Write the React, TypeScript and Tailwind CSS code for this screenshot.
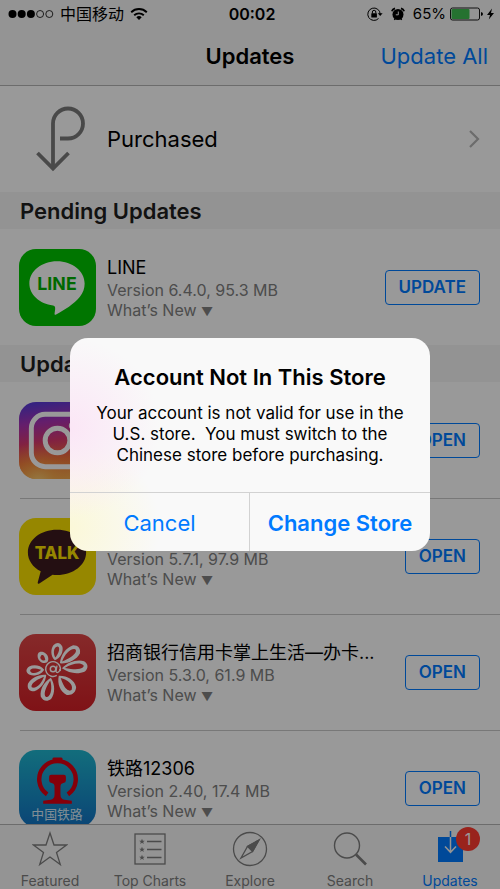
import React from 'react';

interface AppIconProps {
  className?: string;
}

interface StoreApp {
  name: string;
  details?: string;
  icon: React.FC<AppIconProps>;
}

interface TabItem {
  label: string;
  icon: React.ReactNode;
  badge?: number;
  active?: boolean;
}

const LineIcon: React.FC<AppIconProps> = ({ className }) => (
  <svg viewBox="0 0 78 78" className={className} aria-hidden="true">
    <rect width="78" height="78" fill="#00c300" />
    <path
      d="M38.500 12.500C23 12.500 10.500 22.500 10.500 35C10.500 46.500 21 55.500 34.500 57.300C36.500 57.800 36.800 59 36.600 61L36 65.500C36 66.500 36.500 67 37.600 66.400C46 61.800 56 55.500 61.500 48.600C65 44.500 66.500 40 66.500 35C66.500 22.500 54 12.500 38.500 12.500Z"
      fill="#fff"
    />
    <text x="38.500" y="42" textAnchor="middle" fontSize="18" fontWeight="700" fill="#00b000" fontFamily="Inter, sans-serif">
      LINE
    </text>
  </svg>
);

const InstagramIcon: React.FC<AppIconProps> = ({ className }) => (
  <svg viewBox="0 0 78 78" className={className} aria-hidden="true">
    <defs>
      <linearGradient id="ig-base" x1="0.350" y1="0" x2="0.500" y2="1">
        <stop offset="0" stopColor="#5b3ad6" />
        <stop offset="0.250" stopColor="#a832b4" />
        <stop offset="0.500" stopColor="#d8386e" />
        <stop offset="0.750" stopColor="#f07038" />
        <stop offset="1" stopColor="#f2b050" />
      </linearGradient>
      <radialGradient id="ig-glow" cx="0.250" cy="1.050" r="0.550">
        <stop offset="0" stopColor="#f8d078" />
        <stop offset="0.400" stopColor="#f8a84a" stopOpacity="0.600" />
        <stop offset="1" stopColor="#f77737" stopOpacity="0" />
      </radialGradient>
    </defs>
    <rect width="78" height="78" fill="url(#ig-base)" />
    <rect width="78" height="78" fill="url(#ig-glow)" />
    <rect x="12.500" y="12.500" width="53" height="53" rx="14" fill="none" stroke="#fff" strokeWidth="5" />
    <circle cx="39" cy="39" r="12.500" fill="none" stroke="#fff" strokeWidth="5" />
    <circle cx="54" cy="24" r="3.500" fill="#fff" />
  </svg>
);

const TalkIcon: React.FC<AppIconProps> = ({ className }) => (
  <svg viewBox="0 0 78 78" className={className} aria-hidden="true">
    <rect width="78" height="78" fill="#fae100" />
    <path
      d="M38.500 12C22 12 9 22 9 35C9 43 14 50 22 54L19 65C18.700 66.500 20 67 21 66.200L34 57.500C35.500 57.700 37 57.800 38.500 57.800C55 57.800 68 47.500 68 35C68 22 55 12 38.500 12Z"
      fill="#3c1a1e"
    />
    <text x="38.500" y="42" textAnchor="middle" fontSize="17" fontWeight="800" fill="#fae100" fontFamily="Inter, sans-serif">
      TALK
    </text>
  </svg>
);

// angle in degrees, length from the middle of the flower, half width
const PETALS = [
  [-5, 35, 5.2],
  [-40, 34, 5.4],
  [-78, 27, 4.6],
  [-131, 22, 4],
  [176, 27, 4.2],
  [140, 32, 5],
  [104, 33, 5.4],
  [50, 32, 6.2],
];

const FlowerIcon: React.FC<AppIconProps> = ({ className }) => (
  <svg viewBox="0 0 78 78" className={className} aria-hidden="true">
    <defs>
      <linearGradient id="cmb-red" x1="0" y1="0" x2="0" y2="1">
        <stop offset="0" stopColor="#df4646" />
        <stop offset="1" stopColor="#d41f26" />
      </linearGradient>
    </defs>
    <rect width="78" height="78" fill="url(#cmb-red)" />
    <g transform="translate(34.500 35.500)" fill="#fff" fillRule="evenodd">
      {PETALS.map(([angle, len, w]) => (
        <path
          key={angle}
          transform={`rotate(${angle})`}
          d={`M9 0C${len * 0.45} ${-w * 1.1} ${len * 0.7} ${-w * 1.5} ${len - 3} ${-w}C${len + 1} ${-w * 0.4} ${len + 1} ${w * 0.4} ${len - 3} ${w}C${len * 0.7} ${w * 1.5} ${len * 0.45} ${w * 1.1} 9 0Z
             M12 0C${len * 0.55} ${-w * 0.7} ${len * 0.8} ${-w * 0.9} ${len - 4} ${-w * 0.2}C${len - 3} ${w * 0.2} ${len * 0.8} ${w * 0.9} 12 0Z`}
        />
      ))}
      <circle r="7.500" fill="none" stroke="#fff" strokeWidth="1.500" strokeDasharray="41 6" transform="rotate(60)" />
      <circle r="2.800" fill="none" stroke="#fff" strokeWidth="1.500" />
      <path d="M4 -3.500L3 2C3 4.500 6.500 4 7 0" fill="none" stroke="#fff" strokeWidth="1.300" />
    </g>
  </svg>
);

const RailwayIcon: React.FC<AppIconProps> = ({ className }) => (
  <svg viewBox="0 0 78 78" className={className} aria-hidden="true">
    <defs>
      <linearGradient id="rail-blue" x1="0" y1="0" x2="0" y2="1">
        <stop offset="0" stopColor="#1fb6cf" />
        <stop offset="1" stopColor="#1273c4" />
      </linearGradient>
    </defs>
    <rect width="78" height="78" fill="url(#rail-blue)" />
    <path d="M28.500 45A18.500 18.500 0 1 1 49.500 45" fill="none" stroke="#dc0012" strokeWidth="4.500" />
    <path d="M34 12V8.500Q34 7.500 35.500 7.500H42.500Q44 7.500 44 8.500V12Z" fill="#dc0012" />
    <path
      d="M32.500 25H45.500Q47.500 25 47.500 27V31Q47.500 33.500 45 33.500Q42 34 42 37V45Q42 49.500 46 50.500L53.500 51.500V54.500H24.500V51.500L32 50.500Q36 49.500 36 45V37Q36 34 33 33.500Q30.500 33.500 30.500 31V27Q30.500 25 32.500 25Z"
      fill="#dc0012"
    />
    <text x="38.500" y="70" textAnchor="middle" fontSize="13" fill="#d8ecf8" fontFamily="'Noto Sans CJK SC', sans-serif">
      中国铁路
    </text>
  </svg>
);

const pending: StoreApp[] = [{ name: 'LINE', details: 'Version 6.4.0, 95.3 MB', icon: LineIcon }];

const recent: StoreApp[] = [
  { name: 'Instagram', icon: InstagramIcon },
  { name: 'KakaoTalk', details: 'Version 5.7.1, 97.9 MB', icon: TalkIcon },
  { name: '招商银行信用卡掌上生活—办卡...', details: 'Version 5.3.0, 61.9 MB', icon: FlowerIcon },
  { name: '铁路12306', details: 'Version 2.40, 17.4 MB', icon: RailwayIcon },
];

const tabIcon = 'h-9 w-9 fill-none stroke-[#7d7d7d]';

const tabs: TabItem[] = [
  {
    label: 'Featured',
    icon: (
      <svg viewBox="0 0 36 36" className={tabIcon} strokeWidth="1.300">
        <path d="M18 2L22 14H34.500L24.500 21.500L28.300 33.500L18 26L7.700 33.500L11.500 21.500L1.500 14H14Z" />
      </svg>
    ),
  },
  {
    label: 'Top Charts',
    icon: (
      <svg viewBox="0 0 36 36" className={tabIcon} strokeWidth="1.300">
        <rect x="3" y="3" width="30" height="30" />
        <path d="M15 10.500H29.500M15 18.500H29.500M15 26.500H29.500" />
        {[10.5, 18.5, 26.5].map((y) => (
          <path
            key={y}
            transform={`translate(10 ${y})`}
            d="M0 -2.800L0.800 -0.800H2.800L1.200 0.500L1.800 2.500L0 1.300L-1.800 2.500L-1.200 0.500L-2.800 -0.800H-0.800Z"
            fill="#7d7d7d"
            stroke="none"
          />
        ))}
      </svg>
    ),
  },
  {
    label: 'Explore',
    icon: (
      <svg viewBox="0 0 36 36" className={tabIcon} strokeWidth="1.300">
        <circle cx="18" cy="18" r="16.500" />
        <path d="M27 9L15.500 15.500L9 27L20.500 20.500Z" />
        <path d="M27 9L15.500 15.500L20.500 20.500Z" fill="#7d7d7d" />
      </svg>
    ),
  },
  {
    label: 'Search',
    icon: (
      <svg viewBox="0 0 36 36" className={tabIcon} strokeWidth="1.400">
        <circle cx="15" cy="14.500" r="12.500" />
        <path d="M24 23.500L34 33.500" strokeWidth="2.600" />
      </svg>
    ),
  },
  {
    label: 'Updates',
    active: true,
    badge: 1,
    icon: (
      <svg viewBox="0 0 36 36" className="h-9 w-9 fill-none">
        <path d="M6 6H31V31H6Z" fill="#007aff" />
        <path d="M18.500 -1V6" stroke="#007aff" strokeWidth="1.500" />
        <path d="M18.500 6V21M13 15.500L18.500 21.300L24 15.500" stroke="#f7f7f7" strokeWidth="1.500" />
      </svg>
    ),
  },
];

const StatusBar: React.FC = () => (
  <div className="grid h-7 grid-cols-[1fr_auto_1fr] items-center pl-2 pr-1 text-base text-black">
    <div className="flex items-center gap-1.5">
      <svg viewBox="0 0 46 10" className="h-2.5 w-[46px]" aria-hidden="true">
        {[4.5, 13.7, 22.9].map((x) => (
          <circle key={x} cx={x} cy="5" r="4" />
        ))}
        {[32.1, 41.3].map((x) => (
          <circle key={x} cx={x} cy="5" r="3.500" fill="none" stroke="#000" strokeWidth="0.800" />
        ))}
      </svg>
      <span>中国移动</span>
      <svg viewBox="0 0 18 14" className="h-3.5 w-[18px] fill-none stroke-black" strokeWidth="1.900" aria-hidden="true">
        <path d="M1.200 5.200A11.200 11.200 0 0 1 16.800 5.200" />
        <path d="M4.200 8.300A7 7 0 0 1 13.800 8.300" />
        <path d="M9 13L6.300 10.200A4 4 0 0 1 11.700 10.200Z" fill="#000" stroke="none" />
      </svg>
    </div>
    <span className="font-semibold">00:02</span>
    <div className="flex items-center justify-end gap-2">
      <svg viewBox="0 0 16 14" className="h-3.5 w-4" aria-hidden="true">
        <path d="M11.500 11.500A6.200 6.200 0 1 1 13.200 7" fill="none" stroke="#000" strokeWidth="1" />
        <path d="M10.800 6.200H15.600L13.200 9Z" />
        <rect x="4.300" y="6.200" width="5.600" height="4.200" rx="0.500" />
        <path d="M5.400 6.500V5A1.700 1.700 0 0 1 8.800 5V6.500" fill="none" stroke="#000" strokeWidth="1" />
      </svg>
      <svg viewBox="0 0 14 14" className="h-3.5 w-3.5" aria-hidden="true">
        <circle cx="7" cy="7.500" r="5.500" />
        <path d="M0.800 4.300Q1.500 2.200 4 1.400M13.200 4.300Q12.500 2.200 10 1.400" fill="none" stroke="#000" strokeWidth="1.700" />
        <path d="M3.200 12.800L4.500 11.500M10.800 12.800L9.500 11.500" stroke="#000" strokeWidth="1.200" />
        <path d="M7.300 4.500V7.800H4.800" fill="none" stroke="#f7f7f7" strokeWidth="1" />
      </svg>
      <div className="flex items-center gap-1">
        <span className="text-[15px]">65%</span>
        <svg viewBox="0 0 46 14" className="h-3.5 w-[46px]" aria-hidden="true">
          <rect x="0.500" y="1" width="29" height="12" rx="2" fill="none" stroke="#000" strokeWidth="0.900" />
          <rect x="1.500" y="2" width="18" height="10" rx="1" fill="#3fbf50" />
          <path d="M31 5V9Q33 8.500 33 7Q33 5.500 31 5Z" />
          <path d="M42 1.500L37 8H40L38.800 12.500L44 6H41Z" />
        </svg>
      </div>
    </div>
  </div>
);

const SectionTitle: React.FC<{ children: React.ReactNode }> = ({ children }) => (
  <h2 className="flex h-[37px] items-center bg-[#f5f5f5] px-5 pt-0.5 text-[22px] font-semibold text-[#1e1e1e]">{children}</h2>
);

interface AppRowProps {
  app: StoreApp;
  action: string;
}

const AppRow: React.FC<AppRowProps> = ({ app, action }) => {
  const Icon = app.icon;

  return (
    <li className="group pl-5">
      <div className="flex h-[116px] items-center border-t border-[#c8c8c8] pr-5 group-first:border-transparent">
        <Icon className="-ml-px h-[77px] w-[77px] shrink-0 rounded-[17px]" />
        <div className="ml-[11px] min-w-0 flex-1">
          <h3 className="truncate text-lg leading-6 text-black">{app.name}</h3>
          {app.details && (
            <>
              <p className="text-base leading-5 text-[#808080]">{app.details}</p>
              <button type="button" className="block text-base leading-5 text-[#808080]">
                What’s New <span className="text-xs">▼</span>
              </button>
            </>
          )}
        </div>
        <button
          type="button"
          className="ml-3 h-[35px] shrink-0 rounded border border-[#007aff] px-[13px] text-[17px] font-semibold text-[#007aff]"
        >
          {action}
        </button>
      </div>
    </li>
  );
};

const App: React.FC = () => {
  return (
    <div className="relative flex h-screen flex-col overflow-hidden bg-white font-['Inter','Noto_Sans_CJK_SC',sans-serif]">
      <header className="shrink-0 border-b border-[#b4b4b4] bg-[#f7f7f7]">
        <StatusBar />
        <div className="grid h-[57px] grid-cols-[1fr_auto_1fr] items-center px-3">
          <h1 className="col-start-2 text-[22px] font-semibold text-black">Updates</h1>
          <button type="button" className="justify-self-end text-[22px] text-[#007aff]">
            Update All
          </button>
        </div>
      </header>

      <main className="min-h-0 flex-1 overflow-hidden">
        <a href="#purchased" className="flex h-[106px] items-center pl-9 pr-5 text-[22px] text-black">
          <svg viewBox="0 0 49 66" className="h-[66px] w-[49px] fill-none stroke-[#7a7a7a]" strokeWidth="3.800" aria-hidden="true">
            <path d="M17 63V17.500A15 15 0 1 1 32 32.500H24" />
            <path d="M1.500 47L17 62.500L32.500 47" />
          </svg>
          <span className="ml-[22px] flex-1">Purchased</span>
          <svg viewBox="0 0 12 20" className="h-5 w-3 fill-none stroke-[#b4b4b4]" strokeWidth="2.200" aria-hidden="true">
            <path d="M2 2L10 10L2 18" />
          </svg>
        </a>
        <SectionTitle>Pending Updates</SectionTitle>
        <ul>
          {pending.map((app) => (
            <AppRow key={app.name} app={app} action="UPDATE" />
          ))}
        </ul>
        <SectionTitle>Updated Recently</SectionTitle>
        <ul>
          {recent.map((app) => (
            <AppRow key={app.name} app={app} action="OPEN" />
          ))}
        </ul>
      </main>

      <nav className="grid h-[65px] shrink-0 grid-cols-5 border-t border-[#b4b4b4] bg-[#f7f7f7]">
        {tabs.map((tab) => (
          <a
            key={tab.label}
            href={`#${tab.label}`}
            className={`flex flex-col items-center pt-1.5 text-sm leading-5 ${tab.active ? 'text-[#007aff]' : 'text-[#7d7d7d]'}`}
          >
            <span className="relative">
              {tab.icon}
              {tab.badge && (
                <span className="absolute -right-3 -top-1 flex h-6 w-6 items-center justify-center rounded-full bg-[#ff3b30] text-base text-white">
                  {tab.badge}
                </span>
              )}
            </span>
            <span className="mt-1">{tab.label}</span>
          </a>
        ))}
      </nav>

      <div className="absolute inset-0 flex items-center justify-center bg-black/40">
        <div
          role="alertdialog"
          aria-labelledby="alert-title"
          aria-describedby="alert-message"
          className="w-[360px] overflow-hidden rounded-[18px] bg-[#f9f9f9] bg-[radial-gradient(circle_at_0px_90px,#fbe6f6_0px,transparent_90px),radial-gradient(circle_at_0px_190px,#fbf8d8_0px,transparent_90px)]"
        >
          <div className="px-5 pb-[26px] pt-[23px] text-center text-black">
            <h2 id="alert-title" className="text-[22px] font-semibold leading-8">
              Account Not In This Store
            </h2>
            <p id="alert-message" className="mt-2.5 whitespace-pre-line text-[17px] leading-[21px]">
              {'Your account is not valid for use in the\nU.S. store.\u00a0 You must switch to the\nChinese store before purchasing.'}
            </p>
          </div>
          <div className="grid grid-cols-2 border-t border-[#d2d2d2] text-[22px] text-[#007aff]">
            <button type="button" className="h-[58px] border-r border-[#d2d2d2] pt-0.5">
              Cancel
            </button>
            <button type="button" className="h-[58px] pt-0.5 font-semibold">
              Change Store
            </button>
          </div>
        </div>
      </div>
    </div>
  );
};

export default App;
